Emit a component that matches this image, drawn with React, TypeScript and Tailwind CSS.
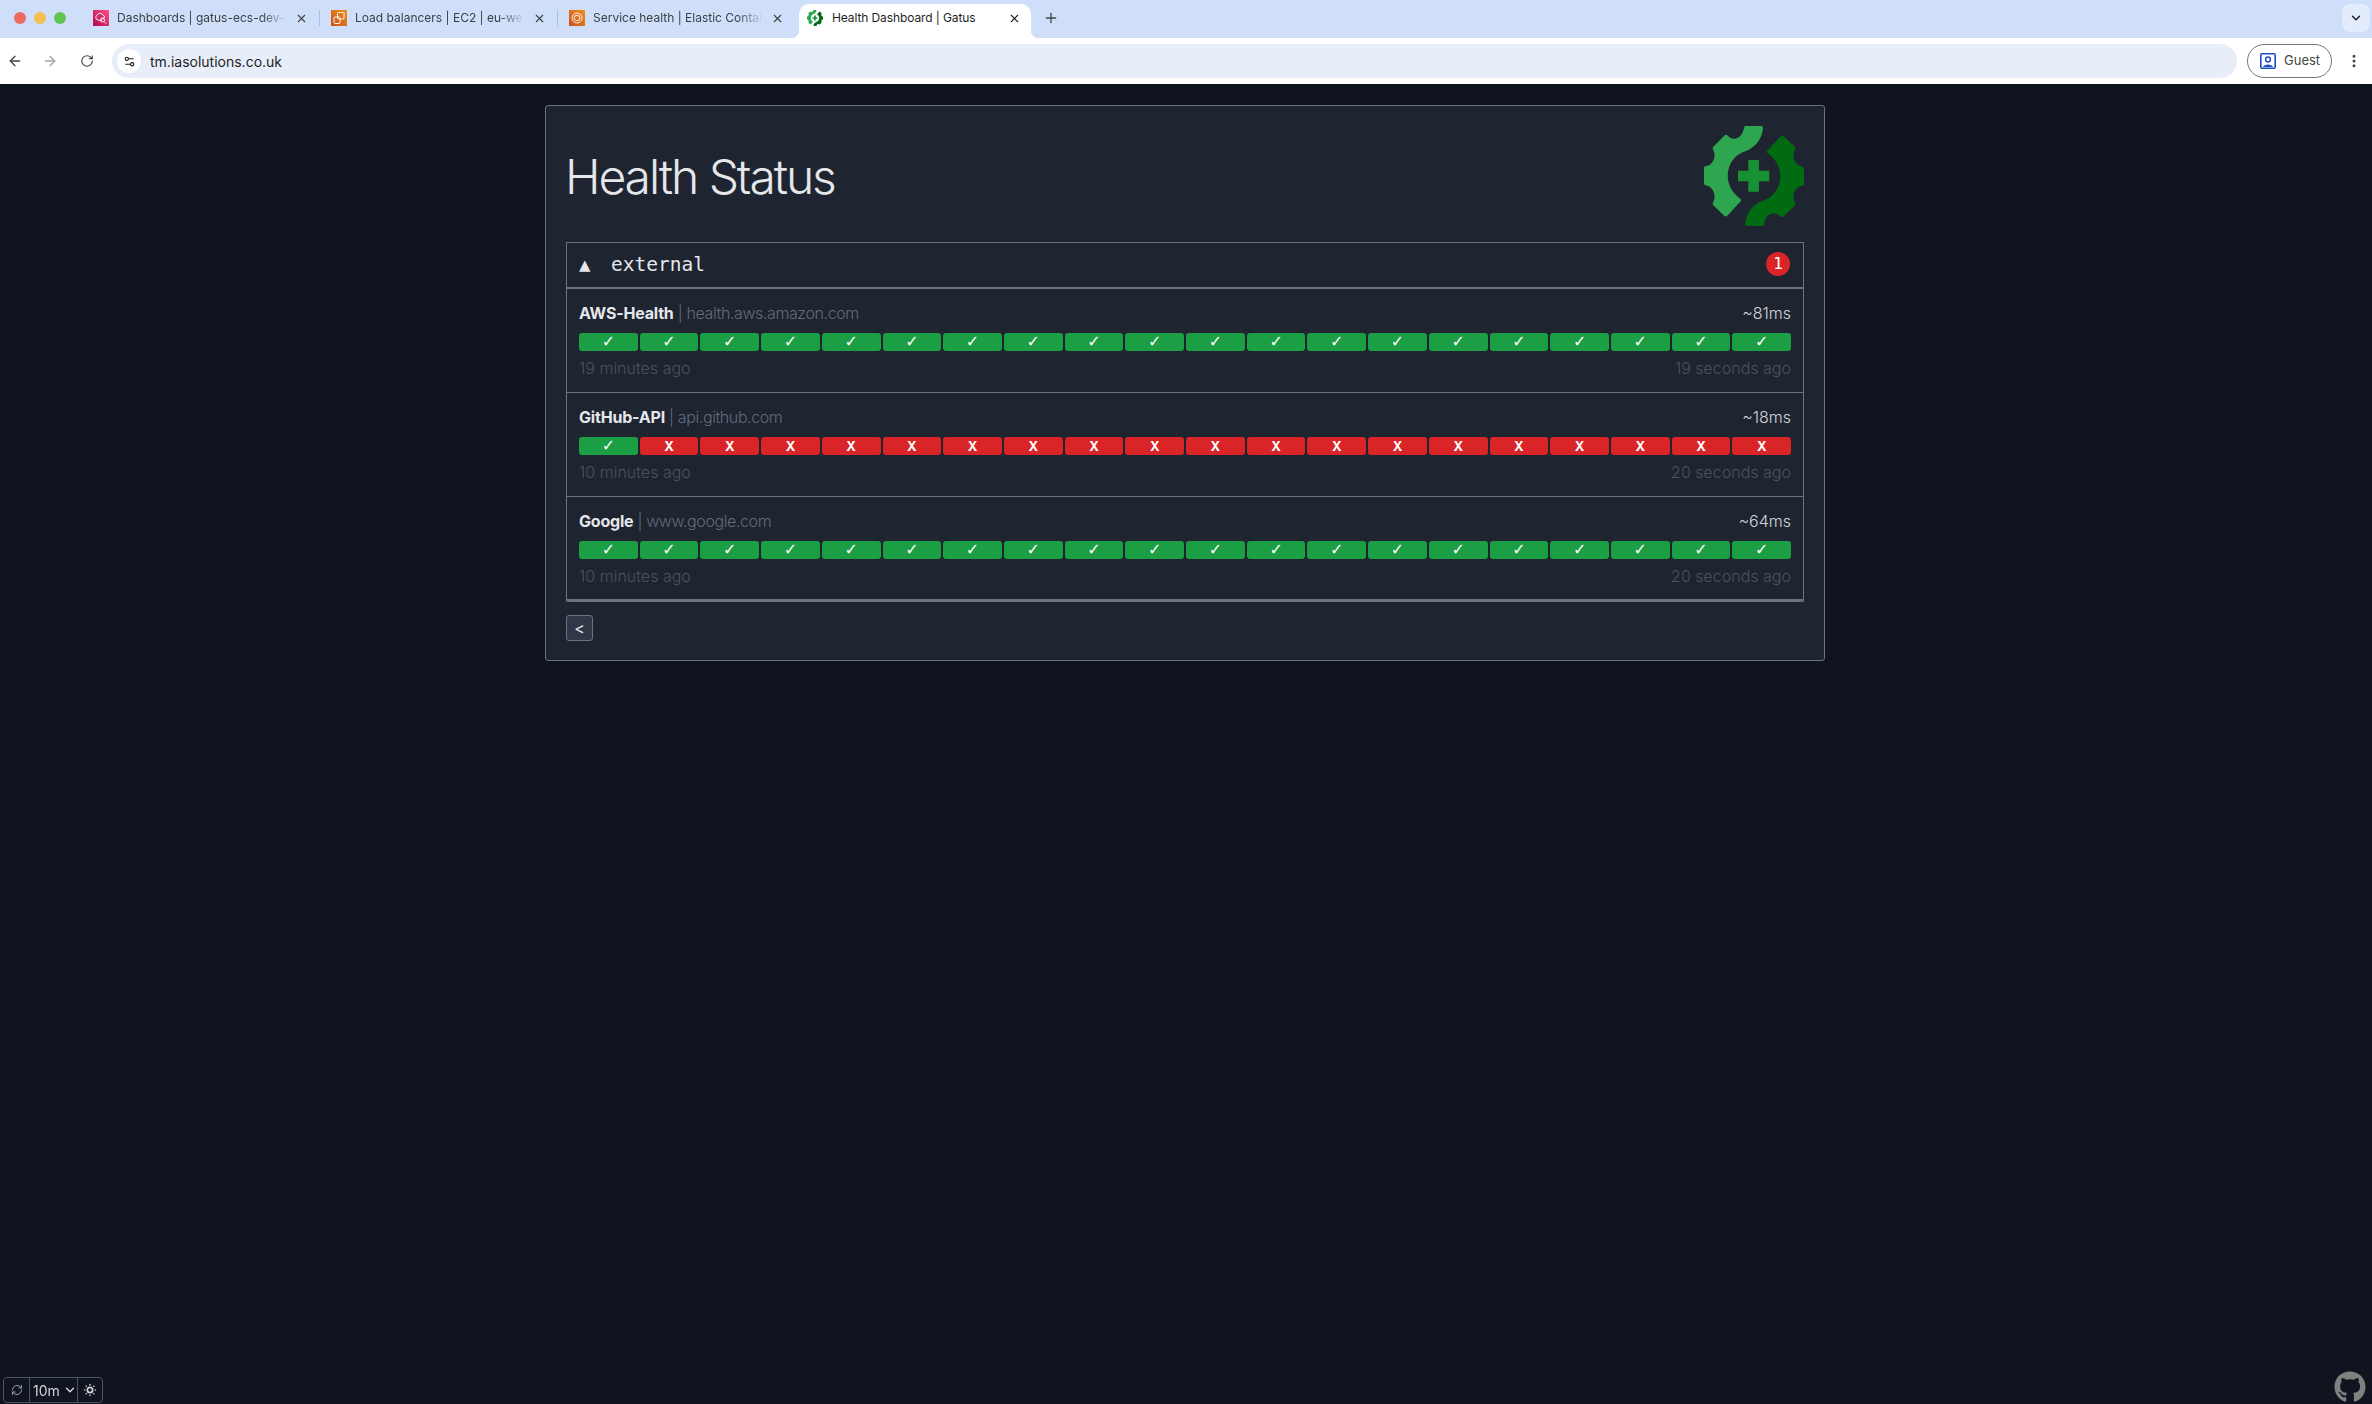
import { ArrowLeft, ArrowRight, ChevronDown, EllipsisVertical, Plus, RefreshCw, RotateCw, Settings2, SunDim, X } from 'lucide-react';
import { FaGithub } from 'react-icons/fa';

const endpoints = [
  { name: 'AWS-Health', host: 'health.aws.amazon.com', ms: '~81ms', oldest: '19 minutes ago', newest: '19 seconds ago', failsAfter: 99 },
  { name: 'GitHub-API', host: 'api.github.com', ms: '~18ms', oldest: '10 minutes ago', newest: '20 seconds ago', failsAfter: 1 },
  { name: 'Google', host: 'www.google.com', ms: '~64ms', oldest: '10 minutes ago', newest: '20 seconds ago', failsAfter: 99 },
];

const tabs = [
  { title: 'Dashboards | gatus-ecs-dev-', from: '#b0084d', to: '#ff4f8b', glyph: 'search' },
  { title: 'Load balancers | EC2 | eu-we', from: '#c8511b', to: '#f09020', glyph: 'boxes' },
  { title: 'Service health | Elastic Contai', from: '#c8511b', to: '#f09020', glyph: 'ring' },
];

function GatusLogo({ className }: { className: string }) {
  const half =
    'M40 2 Q40 0 42 0 L57 0 Q59 0 59 2 C58 14 50 22 42 25 C31 28 23.7 38 23.7 50 C23.7 58 28 67 36 72.5 Q38 74 36.5 75.5 L23.5 89.5 Q22 91 20.5 90 L9.5 79.5 Q8 78 9 76.5 C13 70 9 60 2 59.5 Q0 59 0 57 L0 42 Q0 40 2 40 C9 39.5 13 30 9 23.5 Q8 22 9.5 20.5 L20.5 9.5 Q22 8 23.5 9.5 C28 15 38 14 40 2 Z';
  return (
    <svg viewBox="0 0 100 100" className={className}>
      <path d={half} fill="#2ea64f" />
      <path d={half} fill="#006b11" transform="rotate(180 50 50)" />
      <path d="M44.3 34 H55 V44.7 H65.3 V55.3 H55 V65.7 H44.3 V55.3 H34 V44.7 H44.3 Z" fill="#179133" />
    </svg>
  );
}

function AwsFavicon({ from, to, glyph, index }: { from: string; to: string; glyph: string; index: number }) {
  const id = `fav-${index}`;
  return (
    <svg viewBox="0 0 16 16" className="w-4 h-4 shrink-0">
      <defs>
        <linearGradient id={id} x1="0" y1="1" x2="1" y2="0">
          <stop offset="0" stopColor={from} />
          <stop offset="1" stopColor={to} />
        </linearGradient>
      </defs>
      <rect width="16" height="16" fill={`url(#${id})`} />
      {glyph === 'search' && (
        <g fill="none" stroke="#fff" strokeWidth="0.9">
          <path d="M3 9 C2 5 6 2 9 4 L12 7 C10 8 9 9 8 11 Z" />
          <circle cx="9.5" cy="10" r="2" />
          <path d="M11 11.5 L13 13.5" />
        </g>
      )}
      {glyph === 'boxes' && (
        <g fill="none" stroke="#fff" strokeWidth="0.9">
          <rect x="6.5" y="2.5" width="6.5" height="6.5" rx="1" />
          <rect x="3" y="7" width="6" height="6.5" rx="1" />
        </g>
      )}
      {glyph === 'ring' && (
        <g fill="none" stroke="#fff" strokeWidth="0.9">
          <circle cx="8" cy="8" r="5" />
          <circle cx="8" cy="8" r="2.8" />
        </g>
      )}
    </svg>
  );
}

function BrowserChrome() {
  return (
    <div className="font-['Inter',sans-serif] text-[#1f1f1f]">
      <div className="h-[38px] bg-[#cfdef9] flex items-end pl-[14px] relative">
        <div className="flex gap-2 h-[34px] items-center mr-[16px] pb-[6px]">
          <span className="w-3 h-3 rounded-full bg-[#ed6a5e]" />
          <span className="w-3 h-3 rounded-full bg-[#f4bf4f]" />
          <span className="w-3 h-3 rounded-full bg-[#61c554]" />
        </div>
        {tabs.map((tab, i) => (
          <div key={i} className="w-[238px] h-[34px] flex items-center pl-[11px] pr-[12px] pb-[6px] gap-2 relative text-[12px] text-[#3c4043]">
            <AwsFavicon from={tab.from} to={tab.to} glyph={tab.glyph} index={i} />
            <span className="flex-1 whitespace-nowrap overflow-hidden [mask-image:linear-gradient(to_right,black_85%,transparent)]">{tab.title}</span>
            <X size={13} strokeWidth={2} className="shrink-0" />
            {i < 2 && <span className="absolute right-0 top-[6px] h-4 w-px bg-[#a8c0ec]" />}
          </div>
        ))}
        <div className="w-[232px] h-[34px] ml-[3px] bg-white rounded-t-[10px] flex items-center pl-2 pr-[10px] pb-[6px] gap-[9px] relative text-[12px]">
          <span className="absolute -left-2 bottom-0 w-2 h-2 bg-[radial-gradient(circle_at_0_0,transparent_8px,white_8.5px)]" />
          <span className="absolute -right-2 bottom-0 w-2 h-2 bg-[radial-gradient(circle_at_100%_0,transparent_8px,white_8.5px)]" />
          <GatusLogo className="w-4 h-4 shrink-0" />
          <span className="flex-1 whitespace-nowrap tracking-[-0.1px]">Health Dashboard | Gatus</span>
          <X size={13} strokeWidth={2} className="shrink-0" />
        </div>
        <Plus size={16} strokeWidth={2} className="ml-3 mb-[12px] text-[#444746]" />
        <div className="ml-auto mr-[2px] mb-[6px] w-7 h-7 rounded-lg bg-[#e3ecfc] flex items-center justify-center">
          <ChevronDown size={14} strokeWidth={2.5} />
        </div>
      </div>
      <div className="h-[46px] bg-white flex items-center">
        <ArrowLeft size={16} strokeWidth={2} className="ml-[7px] text-[#444746]" />
        <ArrowRight size={16} strokeWidth={2} className="ml-[19px] text-[#a3a6a8]" />
        <RotateCw size={14} strokeWidth={2} className="ml-[22px] text-[#444746]" />
        <div className="ml-[18px] w-[2125px] h-[34px] rounded-full bg-[#e8eef9] flex items-center pl-[5px]">
          <span className="w-6 h-6 rounded-full bg-white flex items-center justify-center">
            <Settings2 size={13} strokeWidth={2} />
          </span>
          <span className="ml-[9px] text-[14px]">tm.iasolutions.co.uk</span>
        </div>
        <div className="ml-[10px] w-[85px] h-[34px] rounded-full border border-[#747775] flex items-center pl-3 gap-[8px] text-[13px] text-[#444746]">
          <svg viewBox="0 0 16 16" className="w-4 h-4 shrink-0">
            <rect x="0.8" y="0.8" width="14.4" height="14.4" rx="1.5" fill="none" stroke="#1f4fc4" strokeWidth="1.6" />
            <circle cx="8" cy="6.5" r="2.4" fill="none" stroke="#1f4fc4" strokeWidth="1.5" />
            <path d="M3 14 C4 10.5 12 10.5 13 14 Z" fill="#1f4fc4" />
          </svg>
          Guest
        </div>
        <EllipsisVertical size={16} strokeWidth={2.5} className="ml-[14px] text-[#444746]" />
      </div>
    </div>
  );
}

function EndpointRow({ endpoint, last }: { endpoint: (typeof endpoints)[number]; last: boolean }) {
  return (
    <div className={`px-3 py-3 ${last ? 'h-[105px] border-b-[3px] border-[#6b7280] rounded-b-[2px]' : 'h-[104px] border-b border-[#6b7280]'}`}>
      <div className="flex justify-between items-center h-6 text-[16px]">
        <div>
          <span className="font-bold text-[#e5e7eb] tracking-[-0.2px]">{endpoint.name}</span>
          <span className="font-light text-[#636b7a] tracking-[-0.4px]"> | {endpoint.host}</span>
        </div>
        <span className="font-light text-[#d1d5db]">{endpoint.ms}</span>
      </div>
      <div className="flex gap-[2px] mt-2 h-[18px]">
        {Array.from({ length: 20 }).map((_, i) => {
          const ok = i < endpoint.failsAfter;
          return (
            <div
              key={i}
              className={`flex-1 rounded-[3px] flex items-center justify-center text-white font-bold leading-none ${ok ? "bg-[#1c9e45] text-[16px] font-['DejaVu_Sans',sans-serif]" : 'bg-[#d92528] text-[13px]'}`}
            >
              {ok ? '✓' : 'X'}
            </div>
          );
        })}
      </div>
      <div className="flex justify-between mt-[5px] h-6 text-[16px] font-light text-[#4b5260]">
        <span>{endpoint.oldest}</span>
        <span>{endpoint.newest}</span>
      </div>
    </div>
  );
}

export default function App() {
  return (
    <div className="min-h-screen bg-[#10141f] font-['Inter',sans-serif] overflow-hidden">
      <BrowserChrome />
      <div className="w-[1280px] ml-[545px] mt-[21px] px-5 pt-5 pb-[19px] bg-[#1e2430] border border-[#6b7280] rounded-[3px]">
        <div className="flex items-center justify-between mb-4">
          <h1 className="text-[48px] font-light text-[#e5e7eb] leading-none tracking-[-2.1px] pt-[2px] -ml-[1px]">Health Status</h1>
          <GatusLogo className="w-[100px] h-[100px]" />
        </div>
        <div className="border border-[#6b7280] border-b-0">
          <div className="h-[46px] px-3 flex items-center justify-between border-b-[2px] border-[#6b7280] font-['DejaVu_Sans_Mono',monospace] text-[#e5e7eb] text-[19.5px]">
            <div className="flex items-center">
              <span className="w-[32px] text-[19px] -mt-[2px]">▲</span>
              <span>external</span>
            </div>
            <span className="w-6 h-6 -mt-[3px] mr-px rounded-full bg-[#d92528] text-white text-[16px] flex items-center justify-center">1</span>
          </div>
          {endpoints.map((endpoint, i) => (
            <EndpointRow key={endpoint.name} endpoint={endpoint} last={i === endpoints.length - 1} />
          ))}
        </div>
        <button className="mt-[13px] w-[27px] h-[26px] flex items-center justify-center rounded-[3px] border border-[#6b7280] bg-[#303746] text-[#e5e7eb] text-[16px]">
          &lt;
        </button>
      </div>

      <div className="fixed left-[3px] bottom-px h-[26px] w-[100px] flex items-center rounded-[4px] border border-[#4b5563] text-[#d1d5db] text-[14px]">
        <div className="w-[26px] h-full flex items-center justify-center border-r border-[#4b5563]">
          <RefreshCw size={12} className="text-[#9ca3af]" />
        </div>
        <div className="w-[48px] h-full flex items-center justify-center pl-[3px] gap-[3px] border-r border-[#4b5563]">
          10m
          <ChevronDown size={14} strokeWidth={2.5} />
        </div>
        <div className="flex-1 flex items-center justify-center">
          <SunDim size={16} strokeWidth={2.5} className="text-[#d1d5db]" />
        </div>
      </div>
      <FaGithub className="fixed right-[6px] bottom-px w-8 h-8 text-[#808080]" />
    </div>
  );
}
